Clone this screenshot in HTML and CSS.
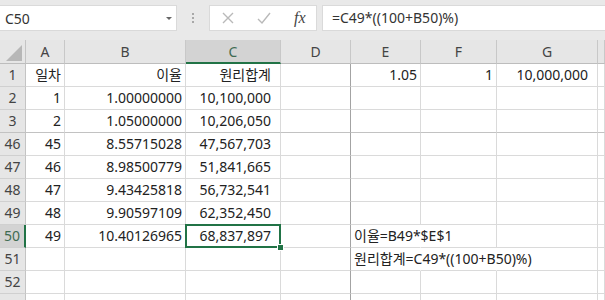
FILE: index.html
```html
<!DOCTYPE html>
<html lang="ko">
<head>
    <meta charset="UTF-8">
    <title>Excel - 원리합계</title>
    <link rel="stylesheet" href="styles.css">
</head>
<body>
    <div class="fbar">
        <div class="namebox">
            <span>C50</span>
            <span class="drop"></span>
        </div>
        <div class="grip"><i></i><i></i><i></i></div>
        <div class="btns">
            <svg class="ico" width="16" height="16" viewBox="0 0 16 16"><path d="M3 3L13 13M13 3L3 13" stroke="#b9b9b9" stroke-width="1.4" fill="none"/></svg>
            <svg class="ico" width="16" height="16" viewBox="0 0 16 16"><path d="M2 9L6 13L14 3" stroke="#b9b9b9" stroke-width="1.4" fill="none"/></svg>
            <span class="fx">fx</span>
        </div>
        <div class="formula">=C49*((100+B50)%)</div>
    </div>

    <div class="sheet">
        <!-- 열 머리글 -->
        <div class="corner"><svg width="26" height="24" viewBox="0 0 26 24"><polygon points="6,21 22,21 22,5" fill="#b7b7b7"/></svg></div>
        <div class="ch">A</div>
        <div class="ch">B</div>
        <div class="ch on">C</div>
        <div class="ch">D</div>
        <div class="ch">E</div>
        <div class="ch">F</div>
        <div class="ch">G</div>
        <div class="ch"></div>

        <div class="rh">1</div>
        <div class="c">일차</div>
        <div class="c">이율</div>
        <div class="c acc">원리합계</div>
        <div class="c d"></div>
        <div class="c">1.05</div>
        <div class="c">1</div>
        <div class="c acc">10,000,000</div>
        <div class="c"></div>

        <div class="rh">2</div>
        <div class="c">1</div>
        <div class="c">1.00000000</div>
        <div class="c acc">10,100,000</div>
        <div class="c d"></div>
        <div class="c"></div>
        <div class="c"></div>
        <div class="c"></div>
        <div class="c"></div>

        <div class="rh gap">3</div>
        <div class="c gap">2</div>
        <div class="c gap">1.05000000</div>
        <div class="c acc gap">10,206,050</div>
        <div class="c d gap"></div>
        <div class="c gap"></div>
        <div class="c gap"></div>
        <div class="c gap"></div>
        <div class="c gap"></div>

        <div class="rh">46</div>
        <div class="c">45</div>
        <div class="c">8.55715028</div>
        <div class="c acc">47,567,703</div>
        <div class="c d"></div>
        <div class="c"></div>
        <div class="c"></div>
        <div class="c"></div>
        <div class="c"></div>

        <div class="rh">47</div>
        <div class="c">46</div>
        <div class="c">8.98500779</div>
        <div class="c acc">51,841,665</div>
        <div class="c d"></div>
        <div class="c"></div>
        <div class="c"></div>
        <div class="c"></div>
        <div class="c"></div>

        <div class="rh">48</div>
        <div class="c">47</div>
        <div class="c">9.43425818</div>
        <div class="c acc">56,732,541</div>
        <div class="c d"></div>
        <div class="c"></div>
        <div class="c"></div>
        <div class="c"></div>
        <div class="c"></div>

        <div class="rh">49</div>
        <div class="c">48</div>
        <div class="c">9.90597109</div>
        <div class="c acc">62,352,450</div>
        <div class="c d"></div>
        <div class="c"></div>
        <div class="c"></div>
        <div class="c"></div>
        <div class="c"></div>

        <div class="rh on">50</div>
        <div class="c">49</div>
        <div class="c">10.40126965</div>
        <div class="c acc sel">68,837,897</div>
        <div class="c d"></div>
        <div class="c txt open">이율=B49*$E$1</div>
        <div class="c"></div>
        <div class="c"></div>
        <div class="c"></div>

        <div class="rh">51</div>
        <div class="c"></div>
        <div class="c"></div>
        <div class="c"></div>
        <div class="c d"></div>
        <div class="c txt open">원리합계=C49*((100+B50)%)</div>
        <div class="c open"></div>
        <div class="c"></div>
        <div class="c"></div>

        <div class="rh">52</div>
        <div class="c"></div>
        <div class="c"></div>
        <div class="c"></div>
        <div class="c d"></div>
        <div class="c"></div>
        <div class="c"></div>
        <div class="c"></div>
        <div class="c"></div>

        <!-- 53행은 화면 아래에 걸쳐 잘림 -->
        <div class="rh"></div>
        <div class="c"></div>
        <div class="c"></div>
        <div class="c"></div>
        <div class="c d"></div>
        <div class="c"></div>
        <div class="c"></div>
        <div class="c"></div>
        <div class="c"></div>
    </div>
</body>
</html>
```

FILE: styles.css
```css
body {
    margin: 0;
    width: 605px;
    height: 300px;
    overflow: hidden;
    background: #fff;
    font-family: "Noto Sans", "Noto Sans CJK KR", sans-serif;
    font-size: 14px;
    color: #222;
}

/* 수식 입력줄 */
.fbar {
    display: flex;
    height: 40px;
    padding-top: 5px;
    box-sizing: border-box;
    background: #e9e9e9;
}

.namebox {
    width: 177px;
    height: 26px;
    box-sizing: border-box;
    background: #fff;
    border: 1px solid #dadada;
    border-left: none;
    display: flex;
    align-items: center;
    justify-content: space-between;
    padding: 0 4px 0 5px;
    color: #333;
}

.drop {
    width: 0;
    height: 0;
    border-left: 3px solid transparent;
    border-right: 3px solid transparent;
    border-top: 3px solid #666;
}

.grip {
    width: 32px;
    display: flex;
    flex-direction: column;
    align-items: center;
    justify-content: center;
    gap: 2px;
    height: 26px;
}

.grip i {
    display: block;
    width: 2px;
    height: 2px;
    background: #a8a8a8;
}

.btns {
    width: 108px;
    height: 26px;
    box-sizing: border-box;
    background: #fff;
    border: 1px solid #dadada;
    display: flex;
    align-items: center;
    padding-left: 10px;
    gap: 20px;
}

.fx {
    font-family: "Liberation Serif", serif;
    font-style: italic;
    font-size: 16px;
    color: #444;
    margin-left: 2px;
}

.formula {
    flex: 1;
    margin-left: 5px;
    height: 26px;
    box-sizing: border-box;
    background: #fff;
    border: 1px solid #dadada;
    border-right: none;
    padding-left: 9px;
    line-height: 24px;
    color: #333;
}

/* 시트 */
.sheet {
    display: grid;
    grid-template-columns: 26px 39px 121px 95px 70px 70px 76px 101px 1fr;
    grid-template-rows: 24px;
    grid-auto-rows: 23px;
}

.corner {
    background: #e6e6e6;
    border-right: 1px solid #c4c4c4;
    border-bottom: 1px solid #bdbdbd;
    box-sizing: border-box;
}

.corner svg {
    display: block;
}

.ch {
    background: #e6e6e6;
    border-right: 1px solid #c8c8c8;
    border-bottom: 1px solid #bdbdbd;
    box-sizing: border-box;
    text-align: center;
    line-height: 23px;
    color: #444;
}

.ch.on {
    background: #d3d3d3;
    color: #3f6b52;
    border-bottom: 2px solid #217346;
}

.rh {
    background: #e6e6e6;
    border-right: 1px solid #c4c4c4;
    border-bottom: 1px solid #d0d0d0;
    box-sizing: border-box;
    text-align: center;
    line-height: 22px;
    color: #444;
}

.rh.on {
    background: #d3d3d3;
    color: #3f6b52;
    border-right: 2px solid #217346;
}

.c {
    border-right: 1px solid #dadada;
    border-bottom: 1px solid #dadada;
    box-sizing: border-box;
    padding: 0 3px;
    text-align: right;
    line-height: 22px;
    white-space: nowrap;
}

.c.acc {
    padding-right: 9px;
}

.c.d {
    border-right-color: #a3a3a3;
}

.gap {
    border-bottom-color: #c2c2c2;
}

.c.txt {
    text-align: left;
    overflow: visible;
}

.c.open {
    border-right-color: transparent;
}

.sel {
    position: relative;
}

.sel::before {
    content: "";
    position: absolute;
    left: -1px;
    top: -1px;
    right: -1px;
    bottom: -1px;
    border: 2px solid #217346;
}

.sel::after {
    content: "";
    position: absolute;
    right: -4px;
    bottom: -4px;
    width: 5px;
    height: 5px;
    background: #217346;
    border: 1px solid #fff;
}
```
